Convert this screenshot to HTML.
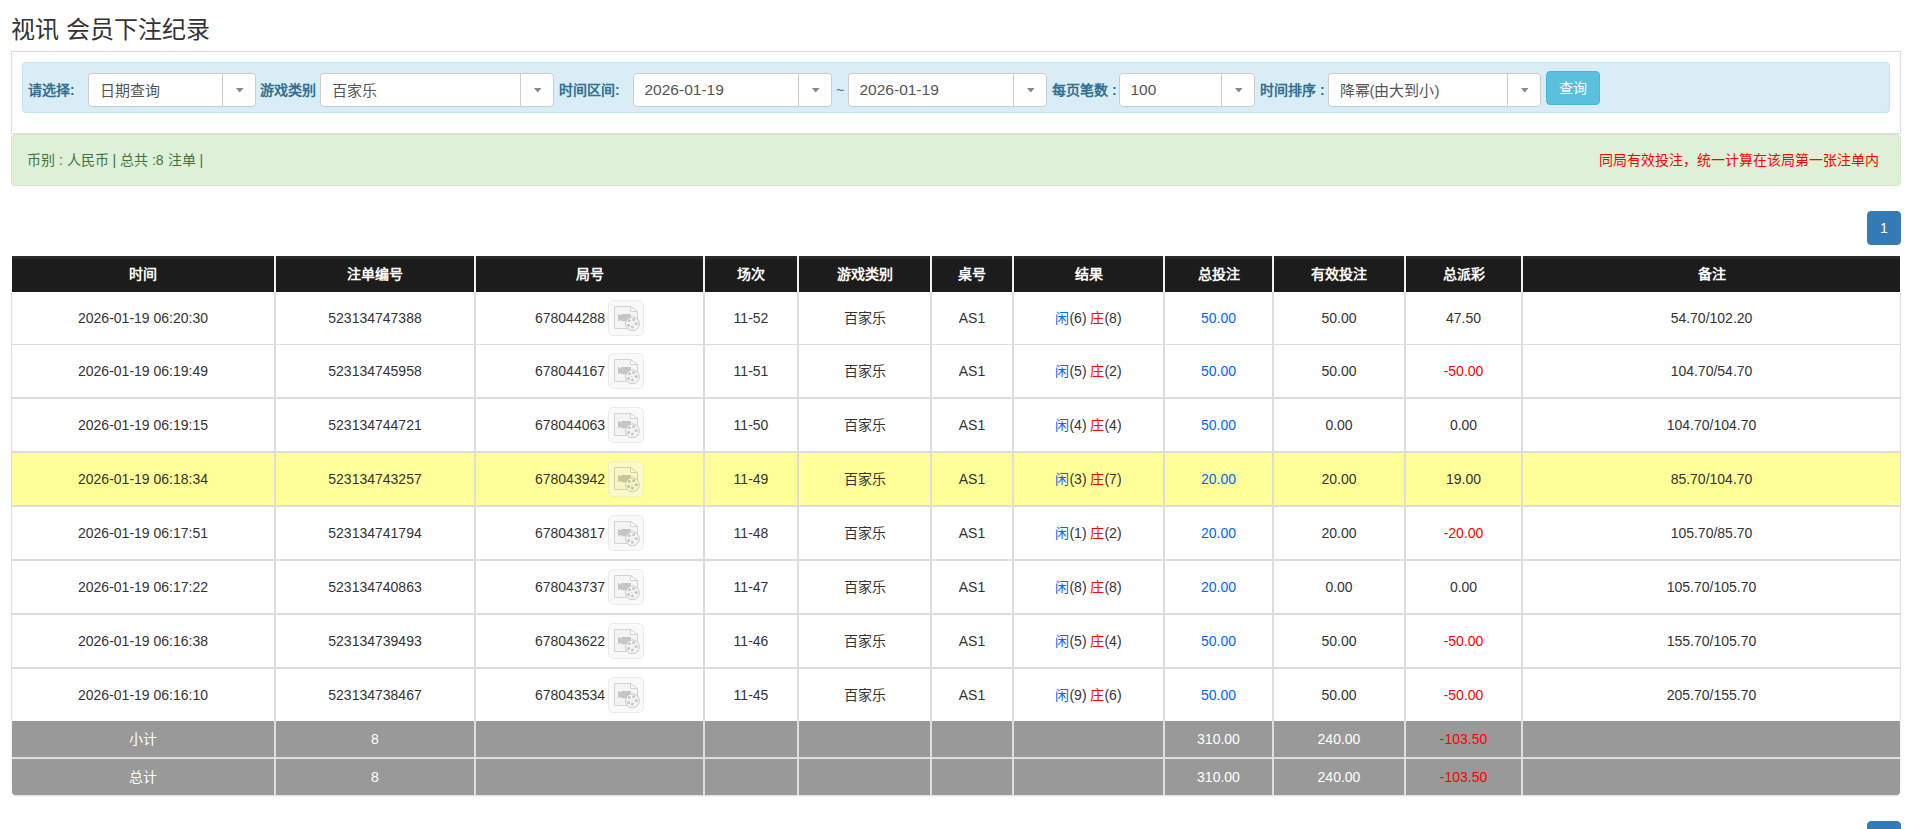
<!DOCTYPE html>
<html lang="zh-CN"><head><meta charset="utf-8"><title>视讯 会员下注纪录</title>
<style>
*{box-sizing:border-box;margin:0;padding:0}
html,body{width:1915px;height:829px;overflow:hidden;background:#fff}
body{position:relative;font-family:"Liberation Sans",sans-serif;font-size:14px;color:#333}
.a{position:absolute}
.c{position:absolute;display:flex;align-items:center;justify-content:center;white-space:pre;line-height:20px}
.title{left:11px;top:15px;font-size:24px;line-height:30px;color:#333;white-space:nowrap}
.panel{left:11px;top:51px;width:1890px;height:83px;border:1px solid #ddd}
.info{left:22px;top:62px;width:1868px;height:51px;background:#d9edf7;border:1px solid #bce8f1;border-radius:4px}
.lbl{position:absolute;top:80px;line-height:20px;font-weight:bold;color:#31708f;white-space:nowrap}
.sel{position:absolute;top:73px;height:34px;background:#fff;border:1px solid #ccc;border-radius:4px}
.sel span{position:absolute;left:10.5px;top:6px;line-height:20px;font-size:15.5px;color:#555;white-space:nowrap}
.sel i{position:absolute;top:0;right:0;width:33px;height:32px;border-left:1px solid #ccc}
.sel i svg{position:absolute;left:0;top:0}
.btn{left:1546px;top:71px;width:54px;height:34px;background:#5bc0de;border:1px solid #46b8da;border-radius:4px;color:#fff;line-height:32px;text-align:center}
.ok{left:11px;top:134px;width:1890px;height:52px;background:#dff0d8;border:1px solid #d6e9c6;border-radius:4px}
.pg{width:34px;height:34px;left:1867px;background:#337ab7;border:1px solid #337ab7;border-radius:4px;color:#fff;line-height:32px;text-align:center}
.hd{background:linear-gradient(#2a2a2a,#2a2a2a 2px,#1c1c1c 4px);color:#fff;font-weight:bold}
.ft{background:#999;color:#fff}
.bl{color:#0066ff}.rd{color:#ff0000}
</style></head><body>

<div class="a title">视讯 会员下注纪录</div>
<div class="a panel"></div><div class="a info"></div>
<div class="lbl" style="left:28px">请选择:</div>
<div class="lbl" style="left:260px">游戏类别</div>
<div class="lbl" style="left:559px">时间区间:</div>
<div class="lbl" style="left:1052px">每页笔数 :</div>
<div class="lbl" style="left:1260px">时间排序 :</div>
<div class="lbl" style="left:836px;font-weight:normal">~</div>
<div class="sel" style="left:88px;width:168px"><span style="font-size:15px;top:6.5px">日期查询</span><i><svg width="32" height="32"><polygon points="13,14 20.5,14 16.75,18.5" fill="#888"/></svg></i></div>
<div class="sel" style="left:320px;width:234px"><span style="font-size:15px;top:6.5px">百家乐</span><i><svg width="32" height="32"><polygon points="13,14 20.5,14 16.75,18.5" fill="#888"/></svg></i></div>
<div class="sel" style="left:633px;width:199px"><span>2026-01-19</span><i><svg width="32" height="32"><polygon points="13,14 20.5,14 16.75,18.5" fill="#888"/></svg></i></div>
<div class="sel" style="left:848px;width:199px"><span>2026-01-19</span><i><svg width="32" height="32"><polygon points="13,14 20.5,14 16.75,18.5" fill="#888"/></svg></i></div>
<div class="sel" style="left:1119px;width:136px"><span>100</span><i><svg width="32" height="32"><polygon points="13,14 20.5,14 16.75,18.5" fill="#888"/></svg></i></div>
<div class="sel" style="left:1328px;width:213px"><span style="font-size:15px;top:6.5px">降幂(由大到小)</span><i><svg width="32" height="32"><polygon points="13,14 20.5,14 16.75,18.5" fill="#888"/></svg></i></div>
<div class="a btn">查询</div>
<div class="a ok"></div>
<div class="a" style="left:27px;top:150px;line-height:20px;color:#3c763d;white-space:nowrap">币别 : 人民币 | 总共 :8 注单 |</div>
<div class="a" style="right:36px;top:150px;line-height:20px;color:#ff0000;white-space:nowrap">同局有效投注，统一计算在该局第一张注单内</div>
<div class="a pg" style="top:211px">1</div>
<div class="a pg" style="top:821px">1</div>
<div class="a" style="left:11px;top:292px;width:1890px;height:429px;background:#ddd"></div>
<div class="a" style="left:12px;top:256px;width:1888px;height:36px;background:#f0f0f0"></div>
<div class="c hd" style="left:12px;top:256px;width:262px;height:36px">时间</div>
<div class="c hd" style="left:276px;top:256px;width:198px;height:36px">注单编号</div>
<div class="c hd" style="left:476px;top:256px;width:227px;height:36px">局号</div>
<div class="c hd" style="left:705px;top:256px;width:92px;height:36px">场次</div>
<div class="c hd" style="left:799px;top:256px;width:131px;height:36px">游戏类别</div>
<div class="c hd" style="left:932px;top:256px;width:80px;height:36px">桌号</div>
<div class="c hd" style="left:1014px;top:256px;width:149px;height:36px">结果</div>
<div class="c hd" style="left:1165px;top:256px;width:107px;height:36px">总投注</div>
<div class="c hd" style="left:1274px;top:256px;width:130px;height:36px">有效投注</div>
<div class="c hd" style="left:1406px;top:256px;width:115px;height:36px">总派彩</div>
<div class="c hd" style="left:1523px;top:256px;width:377px;height:36px">备注</div>
<div class="c" style="left:12px;top:292px;width:262px;height:52px;background:#fff">2026-01-19 06:20:30</div>
<div class="c" style="left:276px;top:292px;width:198px;height:52px;background:#fff">523134747388</div>
<div class="c" style="left:476px;top:292px;width:227px;height:52px;background:#fff">678044288<span style="display:inline-block;width:36px;height:36px;margin-left:3px"><svg width="36" height="36" viewBox="0 0 36 36" style="display:block"><rect x="0.5" y="0.5" width="35" height="35" rx="4.5" fill="#f9f9f9" stroke="#ebebeb"/><path d="M6.5 6.5H22.5L29.5 12V28.5H6.5Z" fill="#f4f4f4" stroke="#d3d3d3"/><path d="M22.5 6.5V11.5H29.5Z" fill="#fdfdfd" stroke="#d3d3d3"/><path d="M10 14L13.3 15.6V19.7L10 21.3Z M13.3 14H22.8V21.3H13.3Z" fill="#c5c5c5"/><circle cx="24.4" cy="23.8" r="6.9" fill="#f6f6f6" stroke="#c8c8c8"/><g fill="#c9c9c9"><circle cx="21.3" cy="20.6" r="1.6"/><circle cx="25.7" cy="19.7" r="1.6"/><circle cx="28.2" cy="23.7" r="1.6"/><circle cx="24.4" cy="27.1" r="1.6"/><circle cx="20.6" cy="25.4" r="1.6"/><circle cx="24" cy="23.4" r="0.6"/></g></svg></span></div>
<div class="c" style="left:705px;top:292px;width:92px;height:52px;background:#fff">11-52</div>
<div class="c" style="left:799px;top:292px;width:131px;height:52px;background:#fff">百家乐</div>
<div class="c" style="left:932px;top:292px;width:80px;height:52px;background:#fff">AS1</div>
<div class="c" style="left:1014px;top:292px;width:149px;height:52px;background:#fff"><span><span class="bl">闲</span>(6) <span class="rd">庄</span>(8)</span></div>
<div class="c" style="left:1165px;top:292px;width:107px;height:52px;background:#fff"><span class="bl">50.00</span></div>
<div class="c" style="left:1274px;top:292px;width:130px;height:52px;background:#fff">50.00</div>
<div class="c" style="left:1406px;top:292px;width:115px;height:52px;background:#fff">47.50</div>
<div class="c" style="left:1523px;top:292px;width:377px;height:52px;background:#fff">54.70/102.20</div>
<div class="c" style="left:12px;top:345px;width:262px;height:52px;background:#fff">2026-01-19 06:19:49</div>
<div class="c" style="left:276px;top:345px;width:198px;height:52px;background:#fff">523134745958</div>
<div class="c" style="left:476px;top:345px;width:227px;height:52px;background:#fff">678044167<span style="display:inline-block;width:36px;height:36px;margin-left:3px"><svg width="36" height="36" viewBox="0 0 36 36" style="display:block"><rect x="0.5" y="0.5" width="35" height="35" rx="4.5" fill="#f9f9f9" stroke="#ebebeb"/><path d="M6.5 6.5H22.5L29.5 12V28.5H6.5Z" fill="#f4f4f4" stroke="#d3d3d3"/><path d="M22.5 6.5V11.5H29.5Z" fill="#fdfdfd" stroke="#d3d3d3"/><path d="M10 14L13.3 15.6V19.7L10 21.3Z M13.3 14H22.8V21.3H13.3Z" fill="#c5c5c5"/><circle cx="24.4" cy="23.8" r="6.9" fill="#f6f6f6" stroke="#c8c8c8"/><g fill="#c9c9c9"><circle cx="21.3" cy="20.6" r="1.6"/><circle cx="25.7" cy="19.7" r="1.6"/><circle cx="28.2" cy="23.7" r="1.6"/><circle cx="24.4" cy="27.1" r="1.6"/><circle cx="20.6" cy="25.4" r="1.6"/><circle cx="24" cy="23.4" r="0.6"/></g></svg></span></div>
<div class="c" style="left:705px;top:345px;width:92px;height:52px;background:#fff">11-51</div>
<div class="c" style="left:799px;top:345px;width:131px;height:52px;background:#fff">百家乐</div>
<div class="c" style="left:932px;top:345px;width:80px;height:52px;background:#fff">AS1</div>
<div class="c" style="left:1014px;top:345px;width:149px;height:52px;background:#fff"><span><span class="bl">闲</span>(5) <span class="rd">庄</span>(2)</span></div>
<div class="c" style="left:1165px;top:345px;width:107px;height:52px;background:#fff"><span class="bl">50.00</span></div>
<div class="c" style="left:1274px;top:345px;width:130px;height:52px;background:#fff">50.00</div>
<div class="c" style="left:1406px;top:345px;width:115px;height:52px;background:#fff"><span class="rd">-50.00</span></div>
<div class="c" style="left:1523px;top:345px;width:377px;height:52px;background:#fff">104.70/54.70</div>
<div class="c" style="left:12px;top:399px;width:262px;height:52px;background:#fff">2026-01-19 06:19:15</div>
<div class="c" style="left:276px;top:399px;width:198px;height:52px;background:#fff">523134744721</div>
<div class="c" style="left:476px;top:399px;width:227px;height:52px;background:#fff">678044063<span style="display:inline-block;width:36px;height:36px;margin-left:3px"><svg width="36" height="36" viewBox="0 0 36 36" style="display:block"><rect x="0.5" y="0.5" width="35" height="35" rx="4.5" fill="#f9f9f9" stroke="#ebebeb"/><path d="M6.5 6.5H22.5L29.5 12V28.5H6.5Z" fill="#f4f4f4" stroke="#d3d3d3"/><path d="M22.5 6.5V11.5H29.5Z" fill="#fdfdfd" stroke="#d3d3d3"/><path d="M10 14L13.3 15.6V19.7L10 21.3Z M13.3 14H22.8V21.3H13.3Z" fill="#c5c5c5"/><circle cx="24.4" cy="23.8" r="6.9" fill="#f6f6f6" stroke="#c8c8c8"/><g fill="#c9c9c9"><circle cx="21.3" cy="20.6" r="1.6"/><circle cx="25.7" cy="19.7" r="1.6"/><circle cx="28.2" cy="23.7" r="1.6"/><circle cx="24.4" cy="27.1" r="1.6"/><circle cx="20.6" cy="25.4" r="1.6"/><circle cx="24" cy="23.4" r="0.6"/></g></svg></span></div>
<div class="c" style="left:705px;top:399px;width:92px;height:52px;background:#fff">11-50</div>
<div class="c" style="left:799px;top:399px;width:131px;height:52px;background:#fff">百家乐</div>
<div class="c" style="left:932px;top:399px;width:80px;height:52px;background:#fff">AS1</div>
<div class="c" style="left:1014px;top:399px;width:149px;height:52px;background:#fff"><span><span class="bl">闲</span>(4) <span class="rd">庄</span>(4)</span></div>
<div class="c" style="left:1165px;top:399px;width:107px;height:52px;background:#fff"><span class="bl">50.00</span></div>
<div class="c" style="left:1274px;top:399px;width:130px;height:52px;background:#fff">0.00</div>
<div class="c" style="left:1406px;top:399px;width:115px;height:52px;background:#fff">0.00</div>
<div class="c" style="left:1523px;top:399px;width:377px;height:52px;background:#fff">104.70/104.70</div>
<div class="c" style="left:12px;top:453px;width:262px;height:52px;background:#ffff99">2026-01-19 06:18:34</div>
<div class="c" style="left:276px;top:453px;width:198px;height:52px;background:#ffff99">523134743257</div>
<div class="c" style="left:476px;top:453px;width:227px;height:52px;background:#ffff99">678043942<span style="display:inline-block;width:36px;height:36px;margin-left:3px"><svg width="36" height="36" viewBox="0 0 36 36" style="display:block"><rect x="0.5" y="0.5" width="35" height="35" rx="4.5" fill="#fafac8" stroke="#efefbd"/><path d="M6.5 6.5H22.5L29.5 12V28.5H6.5Z" fill="#f7f7c5" stroke="#d3d3a1"/><path d="M22.5 6.5V11.5H29.5Z" fill="#fcfccc" stroke="#d3d3a1"/><path d="M10 14L13.3 15.6V19.7L10 21.3Z M13.3 14H22.8V21.3H13.3Z" fill="#c8c896"/><circle cx="24.4" cy="23.8" r="6.9" fill="#f8f8c6" stroke="#c8c8c8"/><g fill="#c6c694"><circle cx="21.3" cy="20.6" r="1.6"/><circle cx="25.7" cy="19.7" r="1.6"/><circle cx="28.2" cy="23.7" r="1.6"/><circle cx="24.4" cy="27.1" r="1.6"/><circle cx="20.6" cy="25.4" r="1.6"/><circle cx="24" cy="23.4" r="0.6"/></g></svg></span></div>
<div class="c" style="left:705px;top:453px;width:92px;height:52px;background:#ffff99">11-49</div>
<div class="c" style="left:799px;top:453px;width:131px;height:52px;background:#ffff99">百家乐</div>
<div class="c" style="left:932px;top:453px;width:80px;height:52px;background:#ffff99">AS1</div>
<div class="c" style="left:1014px;top:453px;width:149px;height:52px;background:#ffff99"><span><span class="bl">闲</span>(3) <span class="rd">庄</span>(7)</span></div>
<div class="c" style="left:1165px;top:453px;width:107px;height:52px;background:#ffff99"><span class="bl">20.00</span></div>
<div class="c" style="left:1274px;top:453px;width:130px;height:52px;background:#ffff99">20.00</div>
<div class="c" style="left:1406px;top:453px;width:115px;height:52px;background:#ffff99">19.00</div>
<div class="c" style="left:1523px;top:453px;width:377px;height:52px;background:#ffff99">85.70/104.70</div>
<div class="c" style="left:12px;top:507px;width:262px;height:52px;background:#fff">2026-01-19 06:17:51</div>
<div class="c" style="left:276px;top:507px;width:198px;height:52px;background:#fff">523134741794</div>
<div class="c" style="left:476px;top:507px;width:227px;height:52px;background:#fff">678043817<span style="display:inline-block;width:36px;height:36px;margin-left:3px"><svg width="36" height="36" viewBox="0 0 36 36" style="display:block"><rect x="0.5" y="0.5" width="35" height="35" rx="4.5" fill="#f9f9f9" stroke="#ebebeb"/><path d="M6.5 6.5H22.5L29.5 12V28.5H6.5Z" fill="#f4f4f4" stroke="#d3d3d3"/><path d="M22.5 6.5V11.5H29.5Z" fill="#fdfdfd" stroke="#d3d3d3"/><path d="M10 14L13.3 15.6V19.7L10 21.3Z M13.3 14H22.8V21.3H13.3Z" fill="#c5c5c5"/><circle cx="24.4" cy="23.8" r="6.9" fill="#f6f6f6" stroke="#c8c8c8"/><g fill="#c9c9c9"><circle cx="21.3" cy="20.6" r="1.6"/><circle cx="25.7" cy="19.7" r="1.6"/><circle cx="28.2" cy="23.7" r="1.6"/><circle cx="24.4" cy="27.1" r="1.6"/><circle cx="20.6" cy="25.4" r="1.6"/><circle cx="24" cy="23.4" r="0.6"/></g></svg></span></div>
<div class="c" style="left:705px;top:507px;width:92px;height:52px;background:#fff">11-48</div>
<div class="c" style="left:799px;top:507px;width:131px;height:52px;background:#fff">百家乐</div>
<div class="c" style="left:932px;top:507px;width:80px;height:52px;background:#fff">AS1</div>
<div class="c" style="left:1014px;top:507px;width:149px;height:52px;background:#fff"><span><span class="bl">闲</span>(1) <span class="rd">庄</span>(2)</span></div>
<div class="c" style="left:1165px;top:507px;width:107px;height:52px;background:#fff"><span class="bl">20.00</span></div>
<div class="c" style="left:1274px;top:507px;width:130px;height:52px;background:#fff">20.00</div>
<div class="c" style="left:1406px;top:507px;width:115px;height:52px;background:#fff"><span class="rd">-20.00</span></div>
<div class="c" style="left:1523px;top:507px;width:377px;height:52px;background:#fff">105.70/85.70</div>
<div class="c" style="left:12px;top:561px;width:262px;height:52px;background:#fff">2026-01-19 06:17:22</div>
<div class="c" style="left:276px;top:561px;width:198px;height:52px;background:#fff">523134740863</div>
<div class="c" style="left:476px;top:561px;width:227px;height:52px;background:#fff">678043737<span style="display:inline-block;width:36px;height:36px;margin-left:3px"><svg width="36" height="36" viewBox="0 0 36 36" style="display:block"><rect x="0.5" y="0.5" width="35" height="35" rx="4.5" fill="#f9f9f9" stroke="#ebebeb"/><path d="M6.5 6.5H22.5L29.5 12V28.5H6.5Z" fill="#f4f4f4" stroke="#d3d3d3"/><path d="M22.5 6.5V11.5H29.5Z" fill="#fdfdfd" stroke="#d3d3d3"/><path d="M10 14L13.3 15.6V19.7L10 21.3Z M13.3 14H22.8V21.3H13.3Z" fill="#c5c5c5"/><circle cx="24.4" cy="23.8" r="6.9" fill="#f6f6f6" stroke="#c8c8c8"/><g fill="#c9c9c9"><circle cx="21.3" cy="20.6" r="1.6"/><circle cx="25.7" cy="19.7" r="1.6"/><circle cx="28.2" cy="23.7" r="1.6"/><circle cx="24.4" cy="27.1" r="1.6"/><circle cx="20.6" cy="25.4" r="1.6"/><circle cx="24" cy="23.4" r="0.6"/></g></svg></span></div>
<div class="c" style="left:705px;top:561px;width:92px;height:52px;background:#fff">11-47</div>
<div class="c" style="left:799px;top:561px;width:131px;height:52px;background:#fff">百家乐</div>
<div class="c" style="left:932px;top:561px;width:80px;height:52px;background:#fff">AS1</div>
<div class="c" style="left:1014px;top:561px;width:149px;height:52px;background:#fff"><span><span class="bl">闲</span>(8) <span class="rd">庄</span>(8)</span></div>
<div class="c" style="left:1165px;top:561px;width:107px;height:52px;background:#fff"><span class="bl">20.00</span></div>
<div class="c" style="left:1274px;top:561px;width:130px;height:52px;background:#fff">0.00</div>
<div class="c" style="left:1406px;top:561px;width:115px;height:52px;background:#fff">0.00</div>
<div class="c" style="left:1523px;top:561px;width:377px;height:52px;background:#fff">105.70/105.70</div>
<div class="c" style="left:12px;top:615px;width:262px;height:52px;background:#fff">2026-01-19 06:16:38</div>
<div class="c" style="left:276px;top:615px;width:198px;height:52px;background:#fff">523134739493</div>
<div class="c" style="left:476px;top:615px;width:227px;height:52px;background:#fff">678043622<span style="display:inline-block;width:36px;height:36px;margin-left:3px"><svg width="36" height="36" viewBox="0 0 36 36" style="display:block"><rect x="0.5" y="0.5" width="35" height="35" rx="4.5" fill="#f9f9f9" stroke="#ebebeb"/><path d="M6.5 6.5H22.5L29.5 12V28.5H6.5Z" fill="#f4f4f4" stroke="#d3d3d3"/><path d="M22.5 6.5V11.5H29.5Z" fill="#fdfdfd" stroke="#d3d3d3"/><path d="M10 14L13.3 15.6V19.7L10 21.3Z M13.3 14H22.8V21.3H13.3Z" fill="#c5c5c5"/><circle cx="24.4" cy="23.8" r="6.9" fill="#f6f6f6" stroke="#c8c8c8"/><g fill="#c9c9c9"><circle cx="21.3" cy="20.6" r="1.6"/><circle cx="25.7" cy="19.7" r="1.6"/><circle cx="28.2" cy="23.7" r="1.6"/><circle cx="24.4" cy="27.1" r="1.6"/><circle cx="20.6" cy="25.4" r="1.6"/><circle cx="24" cy="23.4" r="0.6"/></g></svg></span></div>
<div class="c" style="left:705px;top:615px;width:92px;height:52px;background:#fff">11-46</div>
<div class="c" style="left:799px;top:615px;width:131px;height:52px;background:#fff">百家乐</div>
<div class="c" style="left:932px;top:615px;width:80px;height:52px;background:#fff">AS1</div>
<div class="c" style="left:1014px;top:615px;width:149px;height:52px;background:#fff"><span><span class="bl">闲</span>(5) <span class="rd">庄</span>(4)</span></div>
<div class="c" style="left:1165px;top:615px;width:107px;height:52px;background:#fff"><span class="bl">50.00</span></div>
<div class="c" style="left:1274px;top:615px;width:130px;height:52px;background:#fff">50.00</div>
<div class="c" style="left:1406px;top:615px;width:115px;height:52px;background:#fff"><span class="rd">-50.00</span></div>
<div class="c" style="left:1523px;top:615px;width:377px;height:52px;background:#fff">155.70/105.70</div>
<div class="c" style="left:12px;top:669px;width:262px;height:52px;background:#fff">2026-01-19 06:16:10</div>
<div class="c" style="left:276px;top:669px;width:198px;height:52px;background:#fff">523134738467</div>
<div class="c" style="left:476px;top:669px;width:227px;height:52px;background:#fff">678043534<span style="display:inline-block;width:36px;height:36px;margin-left:3px"><svg width="36" height="36" viewBox="0 0 36 36" style="display:block"><rect x="0.5" y="0.5" width="35" height="35" rx="4.5" fill="#f9f9f9" stroke="#ebebeb"/><path d="M6.5 6.5H22.5L29.5 12V28.5H6.5Z" fill="#f4f4f4" stroke="#d3d3d3"/><path d="M22.5 6.5V11.5H29.5Z" fill="#fdfdfd" stroke="#d3d3d3"/><path d="M10 14L13.3 15.6V19.7L10 21.3Z M13.3 14H22.8V21.3H13.3Z" fill="#c5c5c5"/><circle cx="24.4" cy="23.8" r="6.9" fill="#f6f6f6" stroke="#c8c8c8"/><g fill="#c9c9c9"><circle cx="21.3" cy="20.6" r="1.6"/><circle cx="25.7" cy="19.7" r="1.6"/><circle cx="28.2" cy="23.7" r="1.6"/><circle cx="24.4" cy="27.1" r="1.6"/><circle cx="20.6" cy="25.4" r="1.6"/><circle cx="24" cy="23.4" r="0.6"/></g></svg></span></div>
<div class="c" style="left:705px;top:669px;width:92px;height:52px;background:#fff">11-45</div>
<div class="c" style="left:799px;top:669px;width:131px;height:52px;background:#fff">百家乐</div>
<div class="c" style="left:932px;top:669px;width:80px;height:52px;background:#fff">AS1</div>
<div class="c" style="left:1014px;top:669px;width:149px;height:52px;background:#fff"><span><span class="bl">闲</span>(9) <span class="rd">庄</span>(6)</span></div>
<div class="c" style="left:1165px;top:669px;width:107px;height:52px;background:#fff"><span class="bl">50.00</span></div>
<div class="c" style="left:1274px;top:669px;width:130px;height:52px;background:#fff">50.00</div>
<div class="c" style="left:1406px;top:669px;width:115px;height:52px;background:#fff"><span class="rd">-50.00</span></div>
<div class="c" style="left:1523px;top:669px;width:377px;height:52px;background:#fff">205.70/155.70</div>
<div class="a" style="left:12px;top:721px;width:1888px;height:74px;background:#dedede;border-radius:0 0 4px 4px;box-shadow:0 1px 2px rgba(0,0,0,.15)"></div>
<div class="c ft" style="left:12px;top:721px;width:262px;height:36px;">小计</div>
<div class="c ft" style="left:276px;top:721px;width:198px;height:36px;">8</div>
<div class="c ft" style="left:476px;top:721px;width:227px;height:36px;"></div>
<div class="c ft" style="left:705px;top:721px;width:92px;height:36px;"></div>
<div class="c ft" style="left:799px;top:721px;width:131px;height:36px;"></div>
<div class="c ft" style="left:932px;top:721px;width:80px;height:36px;"></div>
<div class="c ft" style="left:1014px;top:721px;width:149px;height:36px;"></div>
<div class="c ft" style="left:1165px;top:721px;width:107px;height:36px;">310.00</div>
<div class="c ft" style="left:1274px;top:721px;width:130px;height:36px;">240.00</div>
<div class="c ft" style="left:1406px;top:721px;width:115px;height:36px;"><span class="rd">-103.50</span></div>
<div class="c ft" style="left:1523px;top:721px;width:377px;height:36px;"></div>
<div class="c ft" style="left:12px;top:759px;width:262px;height:36px;border-bottom-left-radius:4px;">总计</div>
<div class="c ft" style="left:276px;top:759px;width:198px;height:36px;">8</div>
<div class="c ft" style="left:476px;top:759px;width:227px;height:36px;"></div>
<div class="c ft" style="left:705px;top:759px;width:92px;height:36px;"></div>
<div class="c ft" style="left:799px;top:759px;width:131px;height:36px;"></div>
<div class="c ft" style="left:932px;top:759px;width:80px;height:36px;"></div>
<div class="c ft" style="left:1014px;top:759px;width:149px;height:36px;"></div>
<div class="c ft" style="left:1165px;top:759px;width:107px;height:36px;">310.00</div>
<div class="c ft" style="left:1274px;top:759px;width:130px;height:36px;">240.00</div>
<div class="c ft" style="left:1406px;top:759px;width:115px;height:36px;"><span class="rd">-103.50</span></div>
<div class="c ft" style="left:1523px;top:759px;width:377px;height:36px;border-bottom-right-radius:4px;"></div>
</body></html>
